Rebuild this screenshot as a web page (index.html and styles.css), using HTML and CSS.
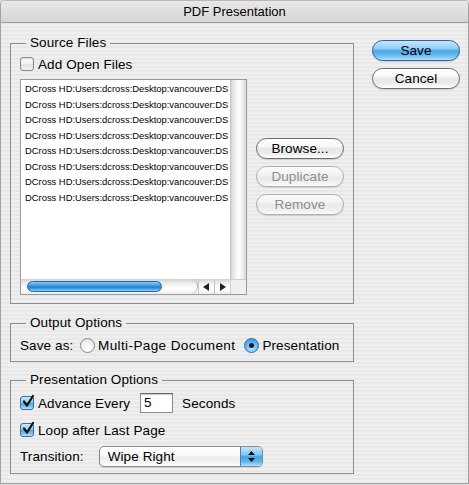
FILE: index.html
```html
<!DOCTYPE html>
<html>
<head>
<meta charset="utf-8">
<link rel="stylesheet" href="styles.css">
</head>
<body>
<div class="window">
  <div class="titlebar">PDF Presentation</div>
  <div class="content">
    <div class="groups">
      <fieldset class="group source">
        <legend>Source Files</legend>
        <div class="check-row">
          <span class="cb"></span><span>Add Open Files</span>
        </div>
        <div class="source-main">
          <div class="list">
            <div class="items">
              <div class="item">DCross HD:Users:dcross:Desktop:vancouver:DS</div>
              <div class="item">DCross HD:Users:dcross:Desktop:vancouver:DS</div>
              <div class="item">DCross HD:Users:dcross:Desktop:vancouver:DS</div>
              <div class="item">DCross HD:Users:dcross:Desktop:vancouver:DS</div>
              <div class="item">DCross HD:Users:dcross:Desktop:vancouver:DS</div>
              <div class="item">DCross HD:Users:dcross:Desktop:vancouver:DS</div>
              <div class="item">DCross HD:Users:dcross:Desktop:vancouver:DS</div>
              <div class="item">DCross HD:Users:dcross:Desktop:vancouver:DS</div>
            </div>
            <div class="vtrack"></div>
            <div class="htrack">
              <div class="lane"><div class="thumb"></div></div>
              <div class="arrow"><svg width="7" height="8" viewBox="0 0 7 8"><path d="M6 0 L0 4 L6 8 Z" fill="#222"/></svg></div>
              <div class="arrow"><svg width="7" height="8" viewBox="0 0 7 8"><path d="M1 0 L7 4 L1 8 Z" fill="#222"/></svg></div>
            </div>
            <div class="corner"></div>
          </div>
          <div class="side-buttons">
            <button class="btn">Browse...</button>
            <button class="btn" disabled>Duplicate</button>
            <button class="btn" disabled>Remove</button>
          </div>
        </div>
      </fieldset>

      <fieldset class="group output">
        <legend>Output Options</legend>
        <div class="radio-row">
          <span class="saveas">Save as:</span>
          <span class="radio-opt"><span class="radio"></span><span class="wide">Multi-Page Document</span></span>
          <span class="radio-opt second"><span class="radio on"></span><span>Presentation</span></span>
        </div>
      </fieldset>

      <fieldset class="group pres">
        <legend>Presentation Options</legend>
        <div class="adv-row">
          <span class="cb on"><svg width="14" height="14" viewBox="0 0 14 14"><path d="M3 6.5 L6 10.5 L12 1" fill="none" stroke="#111" stroke-width="2.2" stroke-linecap="round" stroke-linejoin="round"/></svg></span>
          <span>Advance Every</span>
          <span class="field">5</span>
          <span>Seconds</span>
        </div>
        <div class="check-row loop">
          <span class="cb on"><svg width="14" height="14" viewBox="0 0 14 14"><path d="M3 6.5 L6 10.5 L12 1" fill="none" stroke="#111" stroke-width="2.2" stroke-linecap="round" stroke-linejoin="round"/></svg></span>
          <span>Loop after Last Page</span>
        </div>
        <div class="trans-row">
          <span>Transition:</span>
          <span class="popup">
            <span class="popup-text">Wipe Right</span>
            <span class="popup-arrows"><svg width="7" height="11" viewBox="0 0 7 11"><path d="M3.5 0 L7 4 L0 4 Z M0 7 L7 7 L3.5 11 Z" fill="#111"/></svg></span>
          </span>
        </div>
      </fieldset>
    </div>
    <div class="actions">
      <button class="btn primary">Save</button>
      <button class="btn">Cancel</button>
    </div>
  </div>
</div>
</body>
</html>
```
FILE: styles.css
```css
html, body {
  margin: 0;
  padding: 0;
  background: #dcdcdc;
}
body {
  font-family: "Liberation Sans", Arial, sans-serif;
  font-size: 13.5px;
  letter-spacing: 0.1px;
  color: #000;
}
.window {
  width: 469px;
  height: 484px;
  box-sizing: border-box;
  border: 1px solid #a2a2a2;
  border-top: none;
  background: repeating-linear-gradient(to bottom, #efefef 0, #efefef 2px, #e8e8e8 2px, #e8e8e8 4px);
  border-radius: 5px 5px 0 0;
  overflow: hidden;
}
.titlebar {
  box-sizing: border-box;
  height: 23px;
  line-height: 21px;
  text-align: center;
  font-size: 13px;
  letter-spacing: 0;
  border-top: 1px solid #b8b8b8;
  border-bottom: 1px solid #9c9c9c;
  background: linear-gradient(#e8e8e8, #d6d6d6);
}
.content {
  display: flex;
  align-items: flex-start;
  padding: 12px 0 0 9px;
}
.groups {
  width: 344px;
  display: flex;
  flex-direction: column;
}
.group {
  margin: 0;
  border: 1px solid #8e8e8e;
  min-width: 0;
  padding: 5px 9px 8px 9px;
}
.group legend {
  padding: 0 4px;
  margin-left: 6px;
  line-height: 16px;
  height: 16px;
}
.output { margin-top: 11px; padding-top: 6px; padding-bottom: 8px; }
.pres { margin-top: 10px; padding-top: 5px; padding-bottom: 6px; }

.check-row {
  display: flex;
  align-items: center;
  height: 16px;
  gap: 4px;
}
.cb {
  width: 14px;
  height: 14px;
  box-sizing: border-box;
  border: 1px solid #8a8a8a;
  border-radius: 3px;
  background: linear-gradient(#ffffff, #f2f2f2 50%, #e2e2e2 55%, #f6f6f6);
  box-shadow: inset 0 1px 2px rgba(0,0,0,0.15);
  flex: none;
}
.cb.on {
  border-color: #3f6d9f;
  background: linear-gradient(#cde9fc, #8ccaf3 45%, #4ea6e6 52%, #79c2f2 80%, #b8e4fd);
  box-shadow: none;
}
.cb svg {
  display: block;
  margin: -2px 0 0 0;
  overflow: visible;
}

.source-main {
  display: flex;
  gap: 9px;
  margin-top: 7px;
}
.list {
  width: 227px;
  height: 216px;
  box-sizing: border-box;
  border: 1px solid #9a9a9a;
  display: grid;
  grid-template-columns: 1fr 16px;
  grid-template-rows: 1fr 15px;
  background: #fff;
}
.items {
  overflow: hidden;
  padding: 1px 0 0 4px;
  font-size: 9.4px;
  letter-spacing: 0;
  white-space: nowrap;
}
.item {
  line-height: 15.5px;
  height: 15.5px;
}
.vtrack {
  background: linear-gradient(90deg, #bdbdbd 0, #dedede 2px, #f4f4f4 6px, #ffffff 9px, #ececec 13px, #d8d8d8 16px);
}
.htrack {
  display: flex;
  background: linear-gradient(#d0d0d0 0, #e8e8e8 3px, #fbfbfb 7px, #ffffff 10px, #ececec 15px);
}
.lane {
  flex: 1;
  display: flex;
  align-items: center;
  padding-left: 6px;
  border-radius: 0 8px 8px 0;
  border-right: 1px solid #b4b4b4;
  background: linear-gradient(#cfcfcf 0, #e6e6e6 3px, #f8f8f8 7px, #ffffff 10px, #eeeeee 15px);
}
.thumb {
  width: 135px;
  height: 11px;
  box-sizing: border-box;
  border: 1px solid #2a64a8;
  border-radius: 6px;
  background: linear-gradient(#8cc6f2, #3c93dc 45%, #1f7ad0 55%, #4ea8ec 80%, #8fd2fb);
}
.arrow {
  width: 16px;
  display: flex;
  align-items: center;
  justify-content: center;
  border-left: 1px solid #c6c6c6;
  box-sizing: border-box;
}
.corner {
  background: #efefef;
  border-left: 1px solid #d0d0d0;
  border-top: 1px solid #d0d0d0;
}

.side-buttons {
  display: flex;
  flex-direction: column;
  gap: 7px;
  padding-top: 59px;
}
.btn {
  font-family: "Liberation Sans", Arial, sans-serif;
  font-size: 13.5px;
  line-height: 17px;
  letter-spacing: 0.1px;
  width: 88px;
  height: 21px;
  padding: 0;
  margin: 0;
  border: 1px solid #6c6c6c;
  border-radius: 11px;
  color: #000;
  background: linear-gradient(#ffffff 0%, #f7f7f7 40%, #e6e6e6 52%, #ececec 75%, #ffffff 100%);
  box-shadow: 0 1px 1px rgba(0,0,0,0.12);
}
.btn:disabled {
  color: #8e8e8e;
  border-color: #b0b0b0;
  background: linear-gradient(#fbfbfb 0%, #f3f3f3 40%, #e9e9e9 52%, #eeeeee 75%, #fafafa 100%);
}
.btn.primary {
  border-color: #2f5f97;
  background: linear-gradient(#c4e6fc 0%, #8fcdf5 40%, #4aa6e8 52%, #66b9f0 75%, #b2e2fd 100%);
}

.actions {
  display: flex;
  flex-direction: column;
  gap: 7px;
  margin-left: 18px;
  padding-top: 5px;
}

.radio-row {
  display: flex;
  align-items: center;
  height: 16px;
}
.saveas { width: 60px; }
.radio-opt {
  display: flex;
  align-items: center;
  gap: 3px;
}
.wide { letter-spacing: 0.4px; }
.radio-opt.second { margin-left: 9px; }
.radio {
  width: 15px;
  height: 15px;
  box-sizing: border-box;
  border-radius: 50%;
  border: 1px solid #8a8a8a;
  background: radial-gradient(circle at 50% 70%, #ffffff 0, #f4f4f4 45%, #d6d6d6 100%);
  display: flex;
  align-items: center;
  justify-content: center;
}
.radio.on {
  border-color: #3a6a9e;
  background: radial-gradient(circle at 50% 75%, #bfe6ff 0, #6fbcf2 45%, #2f86d4 100%);
}
.radio.on::after {
  content: "";
  width: 5px;
  height: 5px;
  border-radius: 50%;
  background: #0d1f33;
}

.adv-row {
  display: flex;
  align-items: center;
  height: 20px;
}
.adv-row .cb { margin-right: 4px; }
.field {
  width: 33px;
  height: 20px;
  box-sizing: border-box;
  margin: 0 9px 0 10px;
  border: 1px solid #8c8c8c;
  border-top-color: #666;
  background: #fff;
  box-shadow: inset 0 1px 1px rgba(0,0,0,0.2);
  padding-left: 3px;
  line-height: 18px;
}
.loop { margin-top: 9px; }
.trans-row {
  display: flex;
  align-items: center;
  margin-top: 8px;
  height: 21px;
}
.popup {
  margin-left: 15px;
  width: 164px;
  height: 21px;
  box-sizing: border-box;
  border: 1px solid #8a8a8a;
  border-radius: 5px;
  display: flex;
  overflow: hidden;
  background: linear-gradient(#ffffff 0%, #f8f8f8 45%, #ececec 55%, #f4f4f4 85%, #ffffff 100%);
  box-shadow: 0 1px 1px rgba(0,0,0,0.12);
}
.popup-text {
  flex: 1;
  padding-left: 8px;
  line-height: 19px;
}
.popup-arrows {
  width: 21px;
  display: flex;
  align-items: center;
  justify-content: center;
  border-left: 1px solid #4e7fb4;
  background: linear-gradient(#c0e4fc 0%, #86c8f4 40%, #459fe4 52%, #62b6ee 78%, #ace0fd 100%);
}
```
